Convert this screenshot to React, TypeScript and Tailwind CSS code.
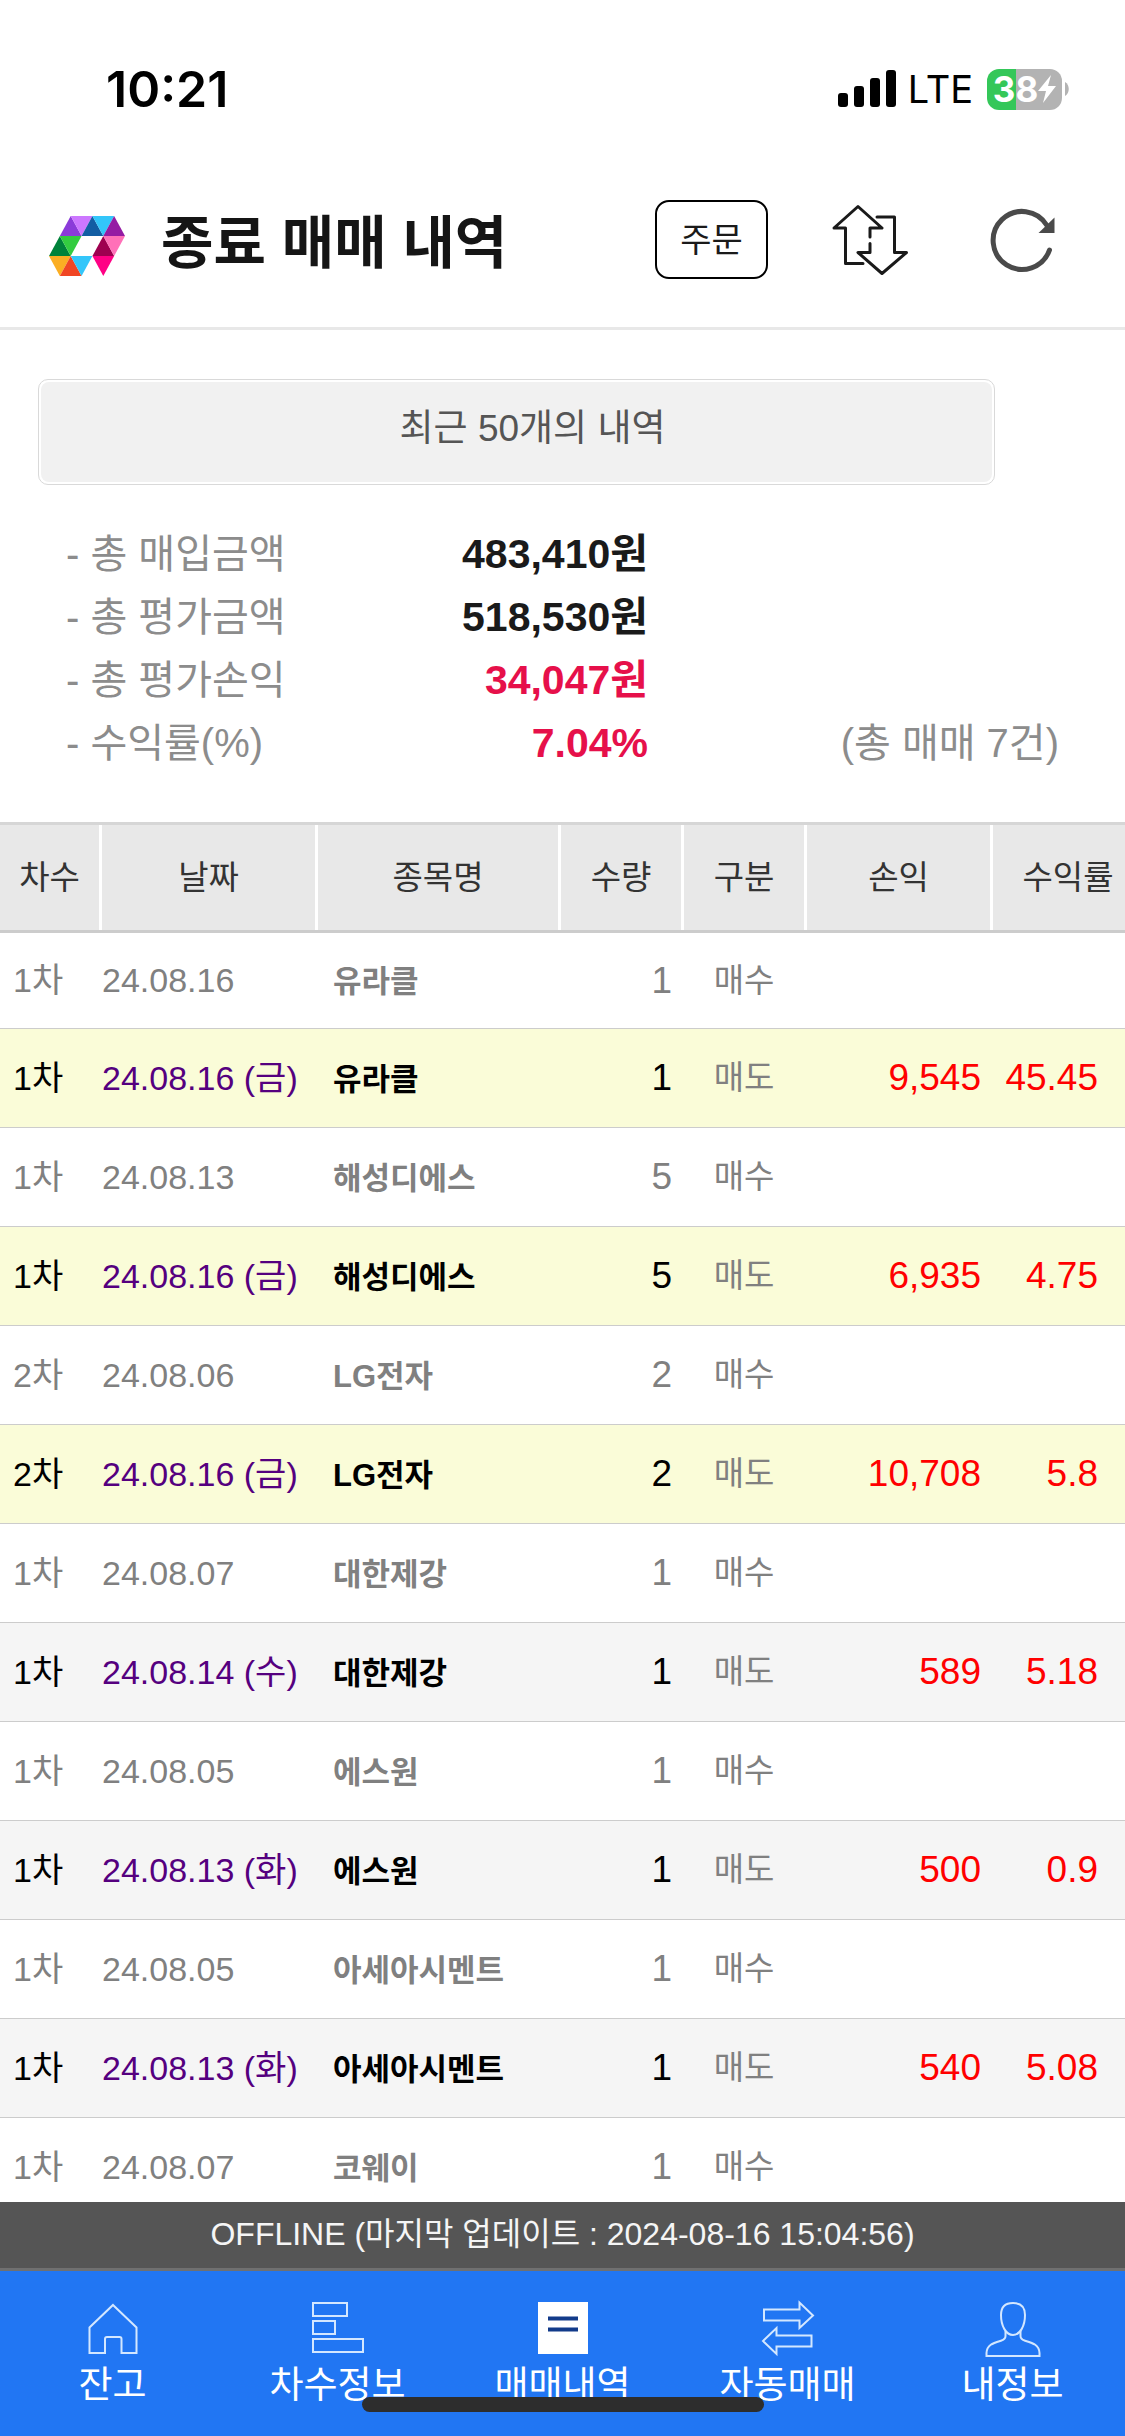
import React from 'react';
import clsx from 'clsx';

interface Trade {
  round: string;
  date: string;
  name: string;
  quantity: number;
  type: '매수' | '매도';
  profit?: string;
  rate?: string;
  today?: boolean;
}

const trades: Trade[] = [
  { round: '1차', date: '24.08.16', name: '유라클', quantity: 1, type: '매수' },
  { round: '1차', date: '24.08.16 (금)', name: '유라클', quantity: 1, type: '매도', profit: '9,545', rate: '45.45', today: true },
  { round: '1차', date: '24.08.13', name: '해성디에스', quantity: 5, type: '매수' },
  { round: '1차', date: '24.08.16 (금)', name: '해성디에스', quantity: 5, type: '매도', profit: '6,935', rate: '4.75', today: true },
  { round: '2차', date: '24.08.06', name: 'LG전자', quantity: 2, type: '매수' },
  { round: '2차', date: '24.08.16 (금)', name: 'LG전자', quantity: 2, type: '매도', profit: '10,708', rate: '5.8', today: true },
  { round: '1차', date: '24.08.07', name: '대한제강', quantity: 1, type: '매수' },
  { round: '1차', date: '24.08.14 (수)', name: '대한제강', quantity: 1, type: '매도', profit: '589', rate: '5.18' },
  { round: '1차', date: '24.08.05', name: '에스원', quantity: 1, type: '매수' },
  { round: '1차', date: '24.08.13 (화)', name: '에스원', quantity: 1, type: '매도', profit: '500', rate: '0.9' },
  { round: '1차', date: '24.08.05', name: '아세아시멘트', quantity: 1, type: '매수' },
  { round: '1차', date: '24.08.13 (화)', name: '아세아시멘트', quantity: 1, type: '매도', profit: '540', rate: '5.08' },
  { round: '1차', date: '24.08.07', name: '코웨이', quantity: 1, type: '매수' },
];

const summary = [
  { label: '총 매입금액', value: '483,410원' },
  { label: '총 평가금액', value: '518,530원' },
  { label: '총 평가손익', value: '34,047원', highlight: true },
  { label: '수익률(%)', value: '7.04%', highlight: true },
];

const columns = [
  { title: '차수', width: 'w-[102px]' },
  { title: '날짜', width: 'w-[216px]' },
  { title: '종목명', width: 'w-[243px]' },
  { title: '수량', width: 'w-[123px]' },
  { title: '구분', width: 'w-[123px]' },
  { title: '손익', width: 'w-[186px]' },
  { title: '수익률', width: 'w-[132px]' },
];

const StatusBar = () => (
  <div className="flex h-[132px] shrink-0 items-center justify-between pt-[46px] pr-[56px] pl-[106px] font-['Inter',sans-serif] text-black">
    <span className="text-[50px] leading-none font-semibold">10:21</span>
    <div className="flex items-center">
      <svg width="58" height="38" viewBox="0 0 58 38" aria-hidden="true">
        <rect x="0" y="23" width="10" height="14" rx="3" />
        <rect x="16" y="16" width="10" height="21" rx="3" />
        <rect x="32" y="8" width="10" height="29" rx="3" />
        <rect x="48" y="0" width="10" height="37" rx="3" />
      </svg>
      <span className="mr-[14px] ml-3 text-[38px] leading-none">LTE</span>
      <div className="flex h-[41px] w-[75px] items-center justify-center rounded-[12px] bg-[linear-gradient(to_right,#34c759_29px,#b3b3b3_29px)] text-white">
        <span className="text-[35px] leading-none font-bold">38</span>
        <svg width="18" height="28" viewBox="0 0 18 28" fill="currentColor" aria-hidden="true">
          <path d="M13 0 0 16h8L5 28 18 11h-8z" />
        </svg>
      </div>
      <svg className="ml-[3px]" width="4" height="14" viewBox="0 0 4 14" aria-hidden="true">
        <path d="M0 0c5 3 5 11 0 14z" fill="#b3b3b3" />
      </svg>
    </div>
  </div>
);

const Logo = () => (
  <svg width="76" height="60" viewBox="0 0 77 60" preserveAspectRatio="none" aria-hidden="true">
    <path fill="#8b3bd9" d="M22 0 11 20h22z" />
    <path fill="#cc77ff" d="M22 0h22L33 20z" />
    <path fill="#125ea3" d="M44 0 33 20h22z" />
    <path fill="#33c6fa" d="M44 0h22L55 20z" />
    <path fill="#951ca3" d="M66 0 55 20h22z" />
    <path fill="#00823a" d="M11 20 0 40h22z" />
    <path fill="#33cc40" d="M11 20h22L22 40z" />
    <path fill="#9e0050" d="M55 20 44 40h22z" />
    <path fill="#ff70b8" d="M55 20h22L66 40z" />
    <path fill="#fbae23" d="M0 40h22L11 60z" />
    <path fill="#f04624" d="M22 40 11 60h22z" />
    <path fill="#33c6fa" d="M22 40h22L33 60z" />
    <path fill="#ff0085" d="M44 40h22L55 60z" />
  </svg>
);

const Header = () => (
  <header className="flex h-[198px] shrink-0 items-center border-b-[3px] border-[#e8e8e8] pt-5 pr-[70px] pl-[49px]">
    <div className="pt-3">
      <Logo />
    </div>
    <h1 className="ml-9 pt-[6px] text-[57px] leading-[80px] font-bold text-[#151515]">종료 매매 내역</h1>
    <div className="ml-auto flex items-center">
      <button type="button" className="h-[79px] w-[113px] rounded-[14px] border-2 border-black text-[34px] leading-none text-[#1a1a1a]">
        주문
      </button>
      <button type="button" aria-label="전환" className="ml-16">
        <svg width="77" height="72" viewBox="0 0 77 72" fill="none" stroke="#1a1a1a" strokeWidth="3" strokeLinecap="round" strokeLinejoin="round">
          <path d="M31 59.5H13.5V24H2L26 2.5 50 24H38v9" />
          <path d="M45 13h17.5v35.5h12L50 69.5l-24-21h12v-9" />
        </svg>
      </button>
      <button type="button" aria-label="새로고침" className="ml-20">
        <svg width="66" height="66" viewBox="0 0 66 66" fill="none">
          <path d="M60.5 43A29 29 0 1 1 58 18.5" stroke="#4a4a4a" strokeWidth="5" strokeLinecap="round" />
          <path d="M65.5 10.5V26h-16z" fill="#4a4a4a" />
        </svg>
      </button>
    </div>
  </header>
);

const Summary = () => (
  <section className="px-[38px] pt-[49px] pb-[47px]">
    <div className="w-[957px] max-w-full rounded-[10px] border border-[#d9d9d9] p-[2px]">
      <select
        aria-label="조회 범위"
        className="block h-[100px] w-full appearance-none rounded-[8px] bg-[#f1f1f1] pb-[6px] pl-8 text-center text-[37px] text-[#555] [text-align-last:center]"
      >
        <option>최근 50개의 내역</option>
      </select>
    </div>
    <div className="mt-[38px] flex items-end justify-between pr-[28px] pl-[28px] text-[40px] leading-[63px] text-[#8c8c8c]">
      <dl className="w-[582px]">
        {summary.map((item) => (
          <div key={item.label} className="flex justify-between">
            <dt>- {item.label}</dt>
            <dd className={clsx('text-[41px] font-bold', item.highlight ? 'text-[#e6104a]' : 'text-[#1a1a1a]')}>
              {item.value}
            </dd>
          </div>
        ))}
      </dl>
      <p>(총 매매 7건)</p>
    </div>
  </section>
);

const TradeRow = ({ trade }: { trade: Trade }) => {
  const sold = trade.type === '매도';
  return (
    <tr
      className={clsx(
        'h-[99px] text-[34px] first:h-[96px] *:border-b *:border-[#ccc] *:p-0',
        sold ? 'text-black' : 'text-[#808080]',
        sold && (trade.today ? 'bg-[#fafcd8]' : 'bg-[#f5f5f5]')
      )}
    >
      <td>
        <span className="pl-[13px]">{trade.round}</span>
      </td>
      <td>
        {sold ? <a href="#trade" className="text-[#55007f]">{trade.date}</a> : trade.date}
      </td>
      <td>
        <span className="pl-[15px] text-[31px] font-bold">{trade.name}</span>
      </td>
      <td className="text-right text-[37px]">
        <span className="pr-3">{trade.quantity}</span>
      </td>
      <td className="text-center text-[33px] text-[#808080]">
        <span className="pr-[3px]">{trade.type}</span>
      </td>
      <td className="text-right text-[37px] text-[#ff0000]">
        <span className="pr-3">{trade.profit}</span>
      </td>
      <td className="text-right text-[37px] text-[#ff0000]">
        <span className="pr-[27px]">{trade.rate}</span>
      </td>
    </tr>
  );
};

const TradeTable = () => (
  <table className="w-full table-fixed border-separate border-spacing-0 whitespace-nowrap">
    <thead>
      <tr>
        {columns.map((column) => (
          <th key={column.title} scope="col" className={clsx('group border-t-[3px] border-b-[3px] border-t-[#d6d6d6] border-b-[#ccc] bg-[#e8e8e8] p-0 font-normal', column.width)}>
            <div className="flex h-[105px] items-center justify-center border-r-[3px] border-white text-[33px] text-[#333] group-last:border-0 group-last:pl-[18px]">
              {column.title}
            </div>
          </th>
        ))}
      </tr>
    </thead>
    <tbody>
      {trades.map((trade, index) => (
        <TradeRow key={index} trade={trade} />
      ))}
    </tbody>
  </table>
);

const tabs = [
  {
    label: '잔고',
    icon: <path d="M29 5 52.5 27.5V53h-15V39q0-2-2-2H23q-2 0-2 2v14H5.500V27.5z" />,
  },
  {
    label: '차수정보',
    icon: (
      <>
        <path d="M4 3h34v13H4z" />
        <path d="M4 21h22v13H4z" />
        <path d="M4 39h50v13H4z" />
      </>
    ),
  },
  {
    label: '매매내역',
    icon: (
      <>
        <path d="M5 3h48v50H5z" fill="#fff" stroke="#fff" />
        <path d="M14 18.5h30M14 29.5h30" stroke="#123b8a" strokeWidth="4" />
      </>
    ),
  },
  {
    label: '자동매매',
    icon: (
      <>
        <path d="M5 9.500h35.500v-7l13.500 13L40.500 28v-7.500H5z" />
        <path d="M52.500 35.500h-35V28L4 41l13.500 13v-7.500h35z" />
      </>
    ),
  },
  {
    label: '내정보',
    icon: (
      <>
        <path d="M29 3c9 0 12 5 12 12 0 11-5 20-12 20s-12-9-12-20c0-7 3-12 12-12z" />
        <path d="M21.5 31v5c0 2-1 3.500-4 4.500-8 2.500-14.500 4-15 12.500v3h53v-3c-.5-8.500-7-10-15-12.500-3-1-4-2.500-4-4.500v-5" />
      </>
    ),
  },
];

const TabBar = () => (
  <nav className="relative grid h-[165px] grid-cols-5 bg-[#2176f3] pt-[29px] text-white">
    {tabs.map((tab) => (
      <a key={tab.label} href="#tab" className="flex flex-col items-center">
        <svg width="58" height="58" viewBox="0 0 58 58" fill="none" stroke="#d3e7ff" strokeWidth="2" aria-hidden="true">
          {tab.icon}
        </svg>
        <span className="mt-[6px] text-[37px] leading-[44px]">{tab.label}</span>
      </a>
    ))}
    {/* home indicator */}
    <div className="absolute bottom-6 left-1/2 h-[15px] w-[402px] -translate-x-1/2 rounded-full bg-[#2d2d2d]" />
  </nav>
);

const App: React.FC = () => {
  return (
    <div lang="ko" className="flex h-screen flex-col overflow-hidden bg-white font-['Liberation_Sans','Noto_Sans_CJK_KR',sans-serif]">
      <StatusBar />
      <Header />
      <main className="min-h-0 flex-1 overflow-hidden">
        <Summary />
        <TradeTable />
      </main>
      <footer className="shrink-0">
        <p className="h-[69px] border-b-[3px] border-[#707070] bg-[#555] text-center text-[32px] leading-[64px] text-[#f5f5f5]">
          OFFLINE (마지막 업데이트 : 2024-08-16 15:04:56)
        </p>
        <TabBar />
      </footer>
    </div>
  );
};

export default App;
